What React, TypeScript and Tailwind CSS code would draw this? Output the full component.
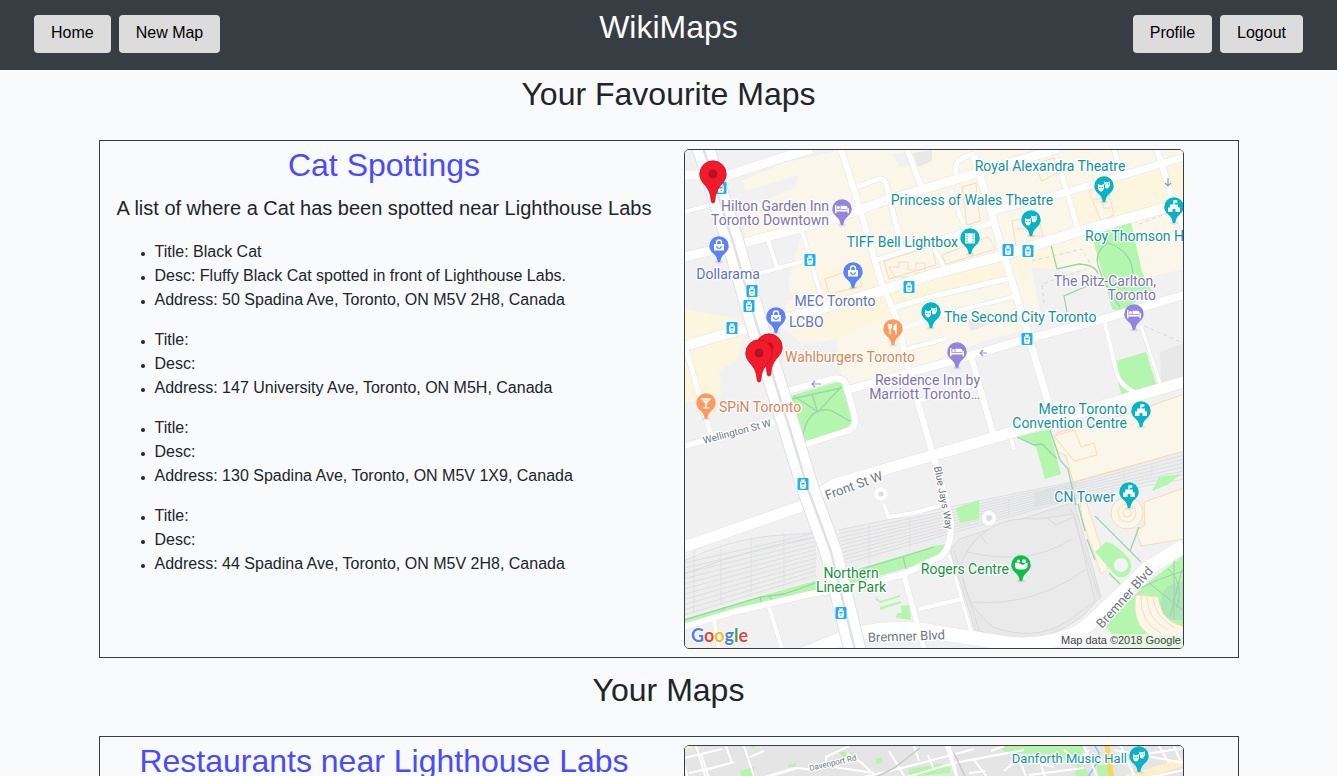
import type { ReactNode } from "react";

type Point = { title: string; desc: string; address: string };
type Anchor = "start" | "middle" | "end";
type Glyph = "bed" | "bag" | "mask" | "film" | "fork" | "drink" | "hall" | "ball";

const points: Point[] = [
  {
    title: "Black Cat",
    desc: "Fluffy Black Cat spotted in front of Lighthouse Labs.",
    address: "50 Spadina Ave, Toronto, ON M5V 2H8, Canada",
  },
  { title: "", desc: "", address: "147 University Ave, Toronto, ON M5H, Canada" },
  { title: "", desc: "", address: "130 Spadina Ave, Toronto, ON M5V 1X9, Canada" },
  { title: "", desc: "", address: "44 Spadina Ave, Toronto, ON M5V 2H8, Canada" },
];

const PURPLE = "#7b73b5";
const BLUE = "#5b72c4";
const TEAL = "#12939a";
const ORANGE = "#dd8256";
const GREEN = "#1a9140";

function NavButton({ children, href }: { children: ReactNode; href: string }) {
  return (
    <a href={href} className="rounded bg-[#dcdcdc] px-[17px] pt-[6px] pb-2 text-base leading-6 text-black">
      {children}
    </a>
  );
}

function PinGlyph({ kind }: { kind: Glyph }) {
  switch (kind) {
    case "bed":
      return (
        <g fill="#fff">
          <path d="M-7 -4h1.500v4.700h11v-1.500h1.500v5h-1.500v-1.700h-11v1.700h-1.500z" />
          <path d="M-1.500 -3.300h5q2 0 2 2v1.200h-7z" />
          <circle cx="-3.500" cy="-1.600" r="1.500" />
        </g>
      );
    case "bag":
      return (
        <g>
          <path d="M-5 -2h10v6.500h-10z" fill="#fff" />
          <path d="M-2.500 -2v-1.500a2.500 2.500 0 0 1 5 0v1.500" fill="none" stroke="#fff" strokeWidth="1.300" />
          <path d="M-2.300 0a2.300 2.300 0 0 0 4.600 0" fill="none" stroke="#5b82f8" strokeWidth="1.100" />
        </g>
      );
    case "mask":
      return (
        <g fill="#fff">
          <path d="M-6 -2l2 1h2l2 -1v4.500q-1 3 -3 3t-3 -3z" />
          <path d="M.3 -4.500l1.500 .7h2l2 -1v4.300q-1 3 -3 3l-1.800 -1v-3h-.7z" />
          <path d="M-4.800 1h1.200v1h-1.200zM-2.300 1h1.200v1h-1.200zM1.700 -2.500h1v1h-1zM4 -2.500h1v1h-1z" fill="#06b4c6" />
        </g>
      );
    case "film":
      return (
        <g>
          <path d="M-5 -5h10v10.500h-10z" fill="#fff" />
          <path d="M-3 -5v10.500M3 -5v10.500" stroke="#06b4c6" strokeWidth="1" strokeDasharray="1.500 1" />
        </g>
      );
    case "fork":
      return (
        <g fill="none" stroke="#fff">
          <path d="M-4.500 -5v3q0 1.500 1.500 1.500t1.500 -1.500v-3M-3 -5v10.500" strokeWidth="1.300" />
          <path d="M3 5.500v-10q-2 1 -2 5h2" fill="#fff" strokeWidth="1.500" />
        </g>
      );
    case "drink":
      return (
        <g fill="none" stroke="#fff" strokeWidth="1.300">
          <path d="M-4 -4h8l-4 4.500z" />
          <path d="M-2.500 -2.500h5l-2.500 3z" fill="#fff" stroke="none" />
          <path d="M0 0v4.500M-3 4.800h6" />
        </g>
      );
    case "hall":
      return (
        <g>
          <path d="M-6 5v-4.500h2v-3h3.300v-4.200h4v2.500h-2.700v1.700h3.400v3h2v4.500z" fill="#fff" />
          <path d="M-1.500 5v-2.500q1.500 -1.500 3 0v2.500z" fill="#06b4c6" />
        </g>
      );
    case "ball":
      return (
        <g fill="#fff">
          <path d="M-6 -1.500q1.500 -1.500 3.500 -.5l3 1.500q2 .8 3.500 -1l2.500 -1v4q-1 3 -4 3h-4q-4 0 -4.500 -3z" />
          <circle cx="-2.500" cy="-4" r="1.600" />
          <circle cx="3" cy="-3.800" r="1.900" />
        </g>
      );
  }
}

function Pin({ x, y, color, kind }: { x: number; y: number; color: string; kind: Glyph }) {
  return (
    <g transform={`translate(${x} ${y})`}>
      <ellipse cx="0" cy="16" rx="4" ry="1.500" fill="#000" opacity=".08" />
      <path
        d="M0 -9.800a9.700 9.700 0 0 1 9.700 9.700c0 4 -2.700 6.200 -5 8.600c-2 2 -2.800 4 -3.200 6.400q-.3 1.300 -1.500 1.300t-1.500 -1.300c-.4 -2.400 -1.200 -4.400 -3.200 -6.400c-2.300 -2.400 -5 -4.600 -5 -8.600a9.700 9.700 0 0 1 9.700 -9.700z"
        fill={color}
      />
      <PinGlyph kind={kind} />
    </g>
  );
}

function Marker({ x, y }: { x: number; y: number }) {
  return (
    <g transform={`translate(${x} ${y})`}>
      <path
        d="M0 -13.200a13.200 13.200 0 0 1 13.200 13.200c0 5.500 -3 8.500 -6.300 12.500c-3.200 4 -4.600 8 -5.100 14.500q-.2 2 -1.800 2t-1.800 -2c-.5 -6.500 -1.900 -10.500 -5.100 -14.500c-3.300 -4 -6.300 -7 -6.300 -12.500a13.200 13.200 0 0 1 13.200 -13.200z"
        fill="#f31a2b"
        stroke="#bd1522"
        strokeWidth=".8"
      />
      <circle r="4.500" fill="#b31420" />
    </g>
  );
}

function Stop({ x, y }: { x: number; y: number }) {
  return (
    <g transform={`translate(${x} ${y})`}>
      <rect x="-5.500" y="-6" width="11" height="12" rx="1" fill="#22aef5" />
      <path d="M-2 -4.500h4v1.200h-1v.8h2v6h-1l.8 1.300h-5.600l.8 -1.300h-1v-6h2v-.8h-1z" fill="#fff" />
      <path d="M-1.700 -1.300h3.400v1.800h-3.400zM-.7 1.800h1.400v1h-1.400z" fill="#22aef5" />
    </g>
  );
}

function Label({
  x,
  y,
  color,
  anchor = "start",
  size = 14,
  rotate = 0,
  children,
}: {
  x: number;
  y: number;
  color: string;
  anchor?: Anchor;
  size?: number;
  rotate?: number;
  children: string;
}) {
  return (
    <text
      transform={`translate(${x} ${y}) rotate(${rotate})`}
      fontSize={size}
      fill={color}
      stroke="#fff"
      strokeWidth="2.500"
      strokeLinejoin="round"
      paintOrder="stroke"
      textAnchor={anchor}
    >
      {children}
    </text>
  );
}

const roads: [number, string][] = [
  [9, "M0 26H45L100 8L128 0"],
  [4, "M0 63L30 55"],
  [9, "M0 108L63 93L150 70L200 52L250 37L373 0"],
  [7, "M306 63L383 43L500 8"],
  [5, "M190 112L250 92L308 74"],
  [10, "M0 197L67 178L130 162L200 141L250 125L317 107L393 83L500 54"],
  [5, "M205 160L250 147L327 129"],
  [4, "M212 182L250 168L332 147"],
  [4, "M218 201L250 193L263 189"],
  [6, "M0 297L90 273"],
  [6, "M103 242L148 230Q160 227 163 238L171 270Q172 279 163 282L117 297"],
  [8, "M160 242L250 217L343 190L423 169L500 146"],
  [4, "M233 252L287 237"],
  [6, "M157 0L173 50L197 133L213 170L225 222L248 303L262 350L267 375Q267 400 256 408L220 425L170 438L127 445L50 463L0 478"],
  [6, "M287 207L310 288"],
  [7, "M290 7L340 172L372 280"],
  [5, "M273 25Q267 10 290 5M373 10L394 80M430 0L435 17"],
  [6, "M473 0L490 55L500 80"],
  [4, "M267 40L282 83M250 100L260 118"],
  [5, "M173 38L194 30Q202 28 204 42L218 100M223 0L237 37"],
  [4, "M84 92L93 118M73 125L120 112M118 82L137 147"],
  [5, "M2 200L27 287"],
  [11, "M0 398L115 358L150 335L250 306L500 233"],
  [14, "M120 505L150 493Q180 480 215 480Q240 480 250 483L320 494Q350 499 383 488Q400 482 417 464L463 420L500 397"],
  [4, "M85 458L98 500M30 470L35 500M235 460L278 450"],
  [5, "M220 426L240 500"],
  [3, "M265 406L287 483"],
  [4, "M200 355L204 368L230 364L255 357"],
  [4, "M420 170L433 225Q436 236 450 243M327 290L330 300"],
  [3, "M457 177L477 237"],
];

function railPath(x1: number, x2: number, y1: number, y2: number, z1: number, z2: number, n: number) {
  return Array.from({ length: n }, (_, i) => {
    const t = i / (n - 1);
    return `M${x1} ${y1 + (z1 - y1) * t}L${x2} ${y2 + (z2 - y2) * t}`;
  }).join("");
}

const rails = [
  railPath(0, 132, 414, 384, 466, 426, 11),
  "M0 412Q45 391 85 387L132 384M0 425Q70 398 132 388",
  railPath(155, 392, 381, 332, 416, 349, 10),
  railPath(350, 500, 345, 302, 357, 330, 8),
].join("");

function DowntownMap() {
  return (
    <svg
      viewBox="1 1 498 498"
      role="img"
      aria-label="Map of downtown Toronto"
      fontFamily="Roboto, 'Liberation Sans', sans-serif"
      className="block h-auto w-full bg-[#f1f1f1]"
    >
      {/* Commercial blocks */}
      <path
        fill="#faf6ea"
        d="M58 32L100 14L160 0H500V120L457 130L347 118L357 166L338 182L300 192L250 212L165 238L157 225L152 190L118 195L100 180L105 130L118 85L62 92L58 62L112 38L114 26L62 42Z"
      />
      <path
        fill="#fcf6df"
        d="M0 160L65 172L52 212L35 222L38 245L0 254ZM143 122L190 110L200 135L250 128L258 145L150 190L110 185L105 165ZM385 48L500 14V48L397 78ZM250 128L328 110L332 128L250 146ZM330 105L370 96L380 120L345 118L340 145Z"
      />
      <path fill="#f1f1f1" d="M62 97L84 90L96 118L110 150L78 160ZM208 5L225 2L229 17L216 18ZM284 167L305 163L308 174L285 180Z" />
      <path fill="#e8e8e9" d="M476 203L500 194V228L477 235ZM284 170L302 165L306 175L287 182ZM229 4L248 1V12L234 18Z" />
      {/* Rail corridor */}
      <path
        fill="#ededed"
        d="M0 412L80 387L132 382V430L0 468ZM155 380L250 364L390 332L500 300V326L395 350L250 397L163 421Z"
      />
      <path d={rails} fill="none" stroke="#d8dbdd" strokeWidth=".8" />
      <path d="M10 400V465M37 395V455M67 388V445M100 384V440M185 376V415M226 368V402M285 357V376M325 350V368M440 322V338M468 315V328" stroke="#dadcde" strokeWidth=".6" />
      <path d="M272 359L295 351V370L276 374Z" fill="#b4f6ad" />
      {/* Convention centre and plazas */}
      <g fill="#faf6ea" stroke="#fbdcb4" strokeWidth="1">
        <path d="M373 284L450 263L500 245V302L389 333L382 306L374 303L370 293Z" />
        <path d="M370 287L391 281L397 298L410 294L413 306L390 312Z" />
        <path d="M460 353L500 339V390L457 397L452 382L461 376Z" />
        <path d="M395 345L402 352L424 420L417 425L398 370Z" />
        <path d="M258 106L304 88L312 100L262 115ZM328 72L354 65L360 92L332 97ZM405 42L423 37L430 66L417 72ZM350 15L370 9L373 24L358 32ZM200 112L248 97L252 116L205 130ZM141 130L170 120L178 137L145 145ZM278 38L292 34L296 72L283 76Z" />
        <path d="M205 118h10v-5h9v8h8v-7h9v10h-10v4h-20zM333 80h12v7h12M409 50h10v9h8" fill="none" />
      </g>
      {/* Parks */}
      <g fill="#b4f6ad">
        <path d="M106 247L157 232L168 272L165 280L118 293Z" />
        <path d="M408 87L447 73L458 123L468 142L437 163L428 160Z" />
        <path d="M428 213L462 203L473 237L438 247Z" />
        <path d="M333 288L365 280L377 325L361 330L352 298Z" />
        <path d="M0 470L77 447L134 431V443L57 458L0 474ZM163 423L250 397L267 394L262 406L250 411L167 435Z" />
        <path d="M192 448L196 452L216 446V448L196 454L192 451ZM196 458L217 452V454L196 461ZM217 457L225 456L227 471L212 469L213 464H218Z" />
        <path d="M411 403L422 393Q432 394 446 411Q450 424 440 428Q433 430 427 421Z" />
        <path d="M421 476L463 434L500 406V500H440ZM475 328L497 325L483 336L468 342Z" />
      </g>
      <g fill="none" stroke="#9bd4ab" strokeWidth="1.300">
        <path d="M108 250L157 239M110 247L134 263L157 238M128 245L134 264M118 292Q122 258 146 261L166 272" />
        <path d="M423 82V94Q408 105 416 122Q420 135 436 158M424 94Q448 102 449 125L440 140M367 96L373 120L395 115Q412 116 414 125M383 163L380 147L408 135" />
        <path d="M366 281L376 311L384 320L392 356M333 288L350 296L358 295L373 310M394 355L401 382M411 367L446 402L457 413M403 390L411 411M455 378L446 402M425 424L440 439" />
        <path d="M0 471L77 448L100 445L134 433M165 424L218 408L250 398M219 407L222 420M76 448L78 455M86 446L88 453" />
      </g>
      {/* Stadium */}
      <g stroke="#dadbdc" strokeWidth="1">
        <path d="M266 400L275 390L390 353L417 448L398 468Q365 492 330 491L291 481Z" fill="#e8e8e8" />
        <path d="M278 412Q300 365 355 370L390 365L411 452L382 473Q350 493 309 478Q275 450 278 412Z" fill="#eaeaea" />
        <path d="M283 403Q345 418 388 390M289 453Q350 458 402 420M297 387L303 395M362 368L372 376L392 367M387 360L415 448M270 402L295 481" fill="none" />
      </g>
      {/* Observation tower */}
      <g fill="#faf6ea" stroke="#fbdcb4">
        <circle cx="443" cy="364" r="16" />
        <circle cx="443" cy="364" r="9" />
        <circle cx="443" cy="364" r="4" />
      </g>
      <circle cx="437" cy="416" r="7" fill="#f4f4f4" />
      {/* Amphitheatre */}
      <path d="M452 446Q447 475 467 487H500V477Q479 475 474 448Z" fill="#faf6ea" stroke="#fbdcb4" />
      <path d="M457 447Q456 474 477 484M463 448Q463 470 484 481M469 448Q470 467 491 479" fill="none" stroke="#fbdcb4" strokeWidth="1" />
      <path d="M477 452Q475 465 487 471H500V432Q477 435 477 452Z" fill="#ace7b5" />
      <path d="M465 434L500 462M490 407V470M484 420Q500 432 493 459M498 420L486 468M455 440Q473 430 500 422" fill="none" stroke="#a2caaf" strokeWidth="1" />

      {/* Streets */}
      <g fill="none" strokeLinejoin="round">
        {roads.map(([width, d]) => (
          <path key={d} d={d} stroke="#e4e5e7" strokeWidth={width + 1} />
        ))}
        {roads.map(([width, d]) => (
          <path key={d} d={d} stroke="#fff" strokeWidth={width} />
        ))}
        <path d="M18 -5L51 100L71 170L106 281L124 340L147 403L172 505" stroke="#e0e2e4" strokeWidth="23" />
        <path d="M18 -5L51 100L71 170L106 281L124 340L147 403L172 505" stroke="#fff" strokeWidth="21" />
        <path d="M18 -5L51 100L71 170L106 281L124 340L147 403L172 505" stroke="#dfe2e2" strokeWidth="2.500" />
      </g>
      <g fill="#dcdee0" stroke="#fff" strokeWidth="4">
        <circle cx="197" cy="345" r="4.500" />
        <circle cx="305" cy="369" r="5" />
      </g>
      <path d="M137 235H128M131 232L128 235L131 238M303 204H296M299 201L296 204L299 207M484 29V37M481 34L484 37L487 34" fill="none" stroke="#9997b8" strokeWidth="1.200" />
      <path d="M348 112L398 100L408 118L358 135L360 155M455 75L500 58M460 177L497 193" fill="none" stroke="#d9dadb" strokeDasharray="4 3" />

      <Stop x={37} y={39} />
      <Stop x={126} y={111} />
      <Stop x={225} y={138} />
      <Stop x={68} y={142} />
      <Stop x={65} y={157} />
      <Stop x={48} y={179} />
      <Stop x={324} y={101} />
      <Stop x={344} y={102} />
      <Stop x={343} y={190} />
      <Stop x={119} y={335} />
      <Stop x={157} y={464} />

      <Pin x={158} y={60} color="#9284df" kind="bed" />
      <Pin x={35} y={97} color="#5b82f8" kind="bag" />
      <Pin x={169} y={123} color="#5b82f8" kind="bag" />
      <Pin x={92} y={168} color="#5b82f8" kind="bag" />
      <Pin x={286} y={89} color="#06b4c6" kind="film" />
      <Pin x={347} y={71} color="#06b4c6" kind="mask" />
      <Pin x={420} y={37} color="#06b4c6" kind="mask" />
      <Pin x={490} y={58} color="#06b4c6" kind="hall" />
      <Pin x={247} y={163} color="#06b4c6" kind="mask" />
      <Pin x={450} y={165} color="#9284df" kind="bed" />
      <Pin x={273} y={203} color="#9284df" kind="bed" />
      <Pin x={209} y={180} color="#fc9b60" kind="fork" />
      <Pin x={22} y={254} color="#fc9b60" kind="drink" />
      <Pin x={457} y={262} color="#06b4c6" kind="hall" />
      <Pin x={445} y={343} color="#06b4c6" kind="hall" />
      <Pin x={337} y={416} color="#0fbd4b" kind="ball" />

      <Label x={145} y={62} color={PURPLE} anchor="end">Hilton Garden Inn</Label>
      <Label x={145} y={76} color={PURPLE} anchor="end">Toronto Downtown</Label>
      <Label x={44} y={130} color={BLUE} anchor="middle">Dollarama</Label>
      <Label x={151} y={157} color={BLUE} anchor="middle">MEC Toronto</Label>
      <Label x={105} y={178} color={BLUE}>LCBO</Label>
      <Label x={274} y={98} color={TEAL} anchor="end">TIFF Bell Lightbox</Label>
      <Label x={288} y={56} color={TEAL} anchor="middle">Princess of Wales Theatre</Label>
      <Label x={366} y={22} color={TEAL} anchor="middle">Royal Alexandra Theatre</Label>
      <Label x={401} y={92} color={TEAL}>Roy Thomson H</Label>
      <Label x={472} y={137} color={PURPLE} anchor="end">The Ritz-Carlton,</Label>
      <Label x={472} y={151} color={PURPLE} anchor="end">Toronto</Label>
      <Label x={260} y={173} color={TEAL}>The Second City Toronto</Label>
      <Label x={101} y={213} color={ORANGE}>Wahlburgers Toronto</Label>
      <Label x={35} y={263} color={ORANGE}>SPiN Toronto</Label>
      <Label x={296} y={236} color={PURPLE} anchor="end">Residence Inn by</Label>
      <Label x={296} y={250} color={PURPLE} anchor="end">Marriott Toronto…</Label>
      <Label x={443} y={265} color={TEAL} anchor="end">Metro Toronto</Label>
      <Label x={443} y={279} color={TEAL} anchor="end">Convention Centre</Label>
      <Label x={431} y={353} color={TEAL} anchor="end">CN Tower</Label>
      <Label x={325} y={425} color={GREEN} anchor="end">Rogers Centre</Label>
      <Label x={167} y={429} color={GREEN} anchor="middle">Northern</Label>
      <Label x={167} y={443} color={GREEN} anchor="middle">Linear Park</Label>
      <Label x={20} y={295} color="#6b7780" size={10} rotate={-15}>Wellington St W</Label>
      <Label x={143} y={351} color="#6b7780" size={13} rotate={-20}>Front St W</Label>
      <Label x={250} y={318} color="#6b7780" size={10} rotate={79}>Blue Jays Way</Label>
      <Label x={184} y={493} color="#6b7780" size={13} rotate={-2}>Bremner Blvd</Label>
      <Label x={418} y={480} color="#6b7780" size={13} rotate={-48}>Bremner Blvd</Label>

      <Marker x={29} y={25} />
      <Marker x={85} y={198} />
      <Marker x={75} y={204} />

      <text
        x="7"
        y="493"
        fontSize="18"
        fontWeight="700"
        fontFamily="Lato, sans-serif"
        stroke="#fff"
        strokeWidth="2"
        paintOrder="stroke"
      >
        <tspan fill="#4f7df0">G</tspan>
        <tspan fill="#ea4335">o</tspan>
        <tspan fill="#f5bd18">o</tspan>
        <tspan fill="#4f7df0">g</tspan>
        <tspan fill="#34a853">l</tspan>
        <tspan fill="#ea4335">e</tspan>
      </text>
      <rect x="376" y="485" width="124" height="14" fill="#f5f5f5" opacity=".75" />
      <text x="497" y="495" fontSize="11" fill="#444" textAnchor="end" fontFamily="'Liberation Sans', sans-serif">
        Map data ©2018 Google
      </text>
    </svg>
  );
}

function CityMap() {
  return (
    <svg
      viewBox="1 1 498 498"
      role="img"
      aria-label="Map of Toronto"
      fontFamily="Roboto, 'Liberation Sans', sans-serif"
      className="block h-auto w-full bg-[#e5e5e5]"
    >
      <g fill="#b6f3ab">
        <path d="M56 26L70 22V40H60ZM154 6L170 8L172 14L160 15ZM192 14L198 12V18L192 19ZM104 20L112 18V22H104ZM225 24L257 19L267 23L265 28L225 32ZM315 1H400L396 14L386 17L370 9L322 8ZM393 18L402 24L410 40H390ZM413 20H424L430 40H414ZM64 1H72L70 3Z" />
      </g>
      <path d="M0 1L10 1L0 5ZM442 30L500 13V20L448 40Z" fill="#fbf0cd" />
      <path d="M411 1L415 8L413 18L405 30L415 40" fill="none" stroke="#8dc5ff" strokeWidth="1.500" />
      <g fill="none" stroke="#fff" strokeWidth="2">
        <path d="M0 13L38 4M12 1L24 40M17 8L27 40M5 28L40 20M42 1L48 18M60 1L72 38M0 20L6 40M66 12L80 6M18 26L50 17" />
        <path d="M70 36L112 23L132 25M142 21V12L165 1M163 8L178 18L190 30M150 22L190 28M180 32L222 22L290 4M196 40L270 18L340 5M205 6L222 34M230 1L235 16M244 10L250 25M262 1L275 40M285 28L302 26M290 15L306 36M307 6L320 1M320 26L335 13L370 22M335 13L345 40M355 14L364 40M380 5L395 18L405 5" />
        <path d="M345 30L400 23M400 1L417 40M430 5L500 18M437 1L450 30M460 1L453 22M475 1L485 18M490 1L496 15M440 38L500 25M455 10L500 3" />
      </g>
      <path d="M62 38L112 23M265 1L275 40" fill="none" stroke="#fff" strokeWidth="3" />
      <path d="M188 34L210 23L236 3M270 8L285 40" fill="none" stroke="#c8c9cc" strokeWidth="1.500" />
      <path d="M423 0L429 40" stroke="#fbd45c" strokeWidth="5" />
      <Label x={126} y={26} color="#6b7780" size={8} rotate={-13}>Davenport Rd</Label>
      <Label x={443} y={18} color={TEAL} anchor="end" size={13}>Danforth Music Hall</Label>
      <Pin x={455} y={11} color="#06b4c6" kind="mask" />
    </svg>
  );
}

function MapCard({ title, map, children }: { title: string; map: ReactNode; children?: ReactNode }) {
  return (
    <article className="grid grid-cols-1 border border-[#383c43] md:grid-cols-2">
      <div className="px-[15px] pt-[5px]">
        <h3 className="text-center text-[32px] leading-[38px]">
          <a href="#map" className="text-[#4a4aff]">
            {title}
          </a>
        </h3>
        {children}
      </div>
      <div className="px-[15px] py-2">
        <div className="w-full max-w-[500px] overflow-hidden rounded-[5px] border border-[#383c43]">{map}</div>
      </div>
    </article>
  );
}

export default function App() {
  return (
    <div className="min-h-screen bg-[#f8fafc] font-['Liberation_Sans',Arial,sans-serif] text-base leading-6 text-[#212529]">
      <header className="grid grid-cols-[1fr_auto_1fr] items-start bg-[#383c43] px-[34px] pt-2 pb-[17px]">
        <nav aria-label="Maps" className="flex gap-2 pt-[7px]">
          <NavButton href="#home">Home</NavButton>
          <NavButton href="#new">New Map</NavButton>
        </nav>
        <h1 className="text-[32px] leading-[38px] text-white">WikiMaps</h1>
        <nav aria-label="Account" className="flex justify-end gap-2 pt-[7px]">
          <NavButton href="#profile">Profile</NavButton>
          <NavButton href="#logout">Logout</NavButton>
        </nav>
      </header>

      <main className="mx-auto flex w-full max-w-[1140px] flex-col">
        <section className="pt-[5px]">
          <h2 className="mb-[27px] text-center text-[32px] leading-[38px]">Your Favourite Maps</h2>
          <MapCard title="Cat Spottings" map={<DowntownMap />}>
            <p className="mt-3 mb-5 text-center text-xl leading-6">
              A list of where a Cat has been spotted near Lighthouse Labs
            </p>
            <div className="flex flex-col gap-4">
              {points.map((point) => (
                <ul key={point.address} className="list-disc pl-10 marker:text-xs">
                  <li>Title: {point.title}</li>
                  <li>Desc: {point.desc}</li>
                  <li>Address: {point.address}</li>
                </ul>
              ))}
            </div>
          </MapCard>
        </section>

        <section className="pt-[13px]">
          <h2 className="mb-[27px] text-center text-[32px] leading-[38px]">Your Maps</h2>
          <MapCard title="Restaurants near Lighthouse Labs" map={<CityMap />} />
        </section>
      </main>
    </div>
  );
}
